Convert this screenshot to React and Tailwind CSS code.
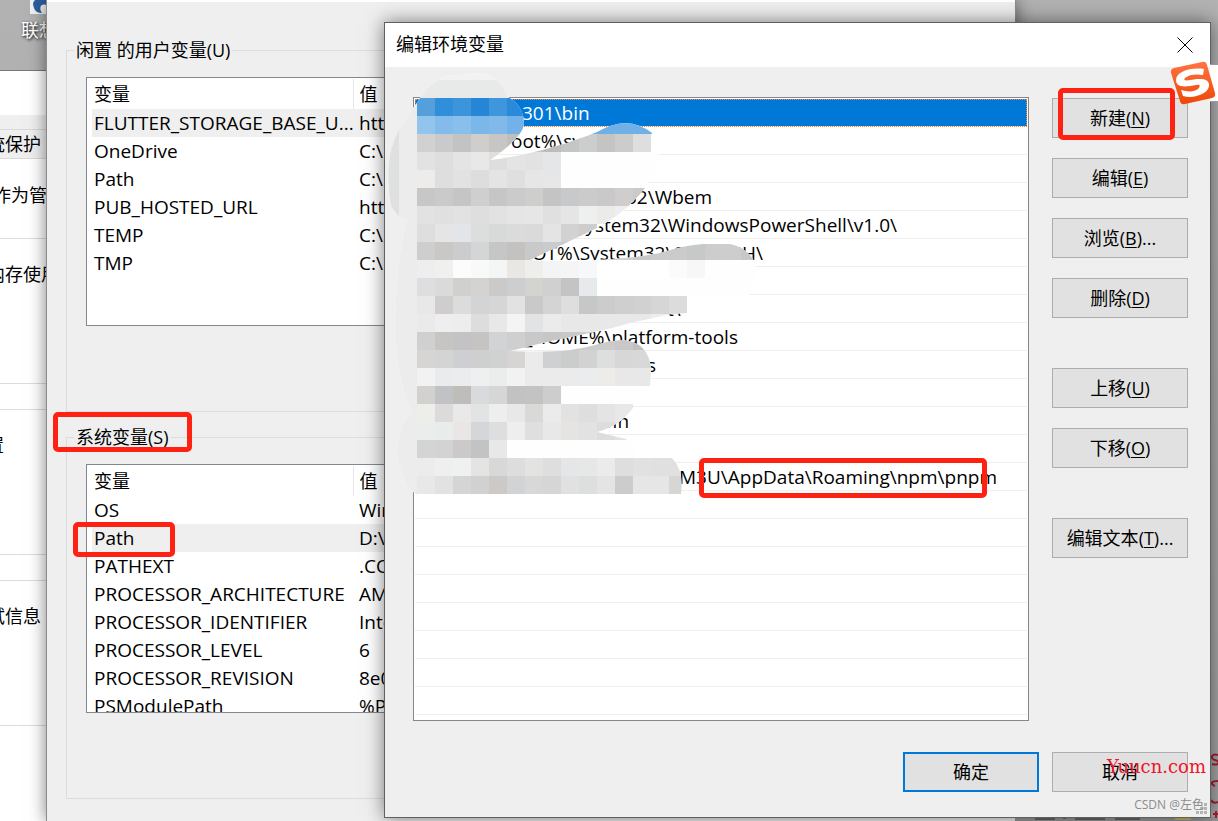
import React from 'react';

const userVars = [
    { name: 'FLUTTER_STORAGE_BASE_U...', value: 'https://storage', selected: true },
    { name: 'OneDrive', value: 'C:\\Users' },
    { name: 'Path', value: 'C:\\Users' },
    { name: 'PUB_HOSTED_URL', value: 'https://pub' },
    { name: 'TEMP', value: 'C:\\Users' },
    { name: 'TMP', value: 'C:\\Users' },
];

const systemVars = [
    { name: 'OS', value: 'Windows_NT' },
    { name: 'Path', value: 'D:\\y', selected: true },
    { name: 'PATHEXT', value: '.COM' },
    { name: 'PROCESSOR_ARCHITECTURE', value: 'AMD64' },
    { name: 'PROCESSOR_IDENTIFIER', value: 'Intel64' },
    { name: 'PROCESSOR_LEVEL', value: '6' },
    { name: 'PROCESSOR_REVISION', value: '8e0c' },
    { name: 'PSModulePath', value: '%Prog' },
];

// indent is the width of the private part in front of each entry
const paths = [
    { indent: 107, text: '301\\bin' },
    { indent: 96, text: 'oot%\\sy' },
    { indent: 0, text: '' },
    { indent: 211, text: '32\\Wbem' },
    { indent: 160, text: 'System32\\WindowsPowerShell\\v1.0\\' },
    { indent: 102, text: 'OOT%\\System32\\OpenSSH\\' },
    { indent: 0, text: '' },
    { indent: 252, text: 't\\' },
    { indent: 109, text: '_HOME%\\platform-tools' },
    { indent: 232, text: 's' },
    { indent: 0, text: '' },
    { indent: 186, text: 'bin' },
    { indent: 0, text: '' },
    { indent: 264, text: 'M3U\\AppData\\Roaming\\npm\\pnpm' },
];

const emptyRows = [1, 2, 3, 4, 5, 6, 7, 8];

const mosaic = [
    '559fda 2f8fdb 3c95db 2586d8 3f96dc 2a8ada',
    '92c5ec 83bcea 88bfec 7cb7e9 80b9ea 72b2e8 6fb1e7 6fb1e7 6fb1e7 6fb1e7 6fb1e7 6fb1e7 6fb1e7 6fb1e7',
    'd1d1d1 cacacc c4c3c3 cfcecd c8c6c4 c0bfbe c6c6c6 bcbcbc c4c5c5 cccdce c5c4c2 cccccd dedede',
    'e2e2e2 dedede e4e4e4 e8e8e8 dededc e4e4e4 e2e2e2 e5e6e8',
    'eeecea dedede e2e2e2 dddddd e4e4e4 dfdfdf e6e6e6 e7e7e8',
    'c7c7c7 cacaca c5c5c6 cfcfcf c6c6c6 cbcbcb cececd c4c4c5 c8c9ca cbcbcb c9c9c9 cfcecd cbcac9',
    'e2e2e2 e0e0e0 e2e2e2 dedede e2e2e2 e5e5e5 e6e6e6 e0e0e0 e5e5e5 eeefef ebebea eeeeee',
    'dededf e5e5e5 e2e5ea dcdedd d8d9d9 dbdbdb dadada e4e4e4 d2d2d2 cdcdcd',
    'cececf c9c8c7 cccccc d3d5d7 c6c6c6 c3c2c0 c9c9c9 c9cbcd c8c8c8 c8c8c8 cdcdcd d0d0d0 c8c8c8 cccccc cbcbcb c7c9c8 cdcdcd cdcdcd c8c8c8',
    'eeeeee f0f0ee fcfcfc f9f9f9 f4f6f5 e8e7e3 eeeeed f3f4f6 f5f5f5 f7f8fa ffffff ffffff ffffff ffffff fbfbfb f7f7f7',
    'dedee0 dadada d0d0ce d4d3d1 cbcac8 ccced0 d3d3d0 d0d0d0 c4c4c4 e6eaed',
    'e8e8e8 d0cecc dcdcdc d2d4d6 d6d6d6 e2e2e2 c9c9c9 d4d4d5 dedede c5c8c7 cccccc cfcfcf d1d1d1 d6d6d6 dcdcdc',
    'eaeaea eeeeee ededed dddddd e8e8e8 f4f4f4 e2e3e4 ebebeb e8e8e8 e8e8e8 e8e8e8 e8e8e8 e8e8e8 eeeeee',
    'd0d0d0 c7c5c2 c3c3c6 c6c4c3 d2d3d4 cfcfcf c9c9c9 c6c6c6 c8c8c8 cccccc cccccc c8c8c8 bfc1c3 c8c8c8',
    'd6d5d4 d4d4d4 cdcfd3 cfcfcf d0d2d1 d6d5d3 ebebeb cfd0d1 cacdcc d2d2d2 dcdfde d7d7d7 d8d8d8',
    'f2f2f2 eaebec ebecee eef0ef ebecec f2f2f2 ebebeb ebebeb ebebeb ebeced edece8 e8e8e8 e8e8e8',
    'd2d1cf c1c2c6 bfbdb9 d8dadd d6d6d6 c2c2c2 c3c3c4 cdcdcd',
    'ededea dcdbd9 e9e9e9 e1e4e3 eeeeee e8e8e8 d9d9d7 ebebeb e2e2e3 dedede e4e4e4 e6e8ea',
    'ebedec e8ecea e9e6e5 d4d6da dedede eeeeee dfdfdf e8e8e8 e5e4e2 e2e2e5 dedddb e4e2df',
    'd4d4d4 d3d3d3 cbc9ca c3c3c3 e6e9e8',
    'ececec eeefee eff1f0 e4e4e2 d8d8d8 dddddd e3e3e2 dedede e5e6e8 e6e8e8 ebebeb dededd e1e1e1 e0e0e0 e0e0e0',
    'e8e8e8 e2e2e2 d5d5d5 d1d1d1 ccc9c7 d1d3d5 d8d8d8 d6d6d6 e1e1e1 dddfde e4e4e4 cccccc e6e6e6 e6e6e6 d8d6d4',
].map(row => row.split(' '));

const Redaction = () => (
    <svg className="absolute left-0 top-[47px] pointer-events-none" width="380" height="428" viewBox="385 70 380 428" aria-hidden="true">
        <clipPath id="brush">
            <path d="M440 79 Q447 74 460 76 Q478 69 495 79 Q503 85 508 97 Q524 106 524 124 Q523 137 490 160 C525 156 565 145 597 132 Q628 114 652 133 L651 152 L660 155 Q658 170 648 183 L645 188 Q625 214 593 230 L530 260 C560 262 590 261 613 259 Q640 257 660 253 Q685 245 703 244 L730 244 Q745 247 753 259 Q759 272 749 295 L687 296 L687 313 L672 314 L630 323 C605 331 560 338 510 351 Q535 352 560 351 C590 349 600 341 623 340 Q648 342 651 368 L650 386 L633 404 L633 408 Q620 426 597 432 L626 439 L640 458 L672 458 Q684 470 681 494 L417 495 Q400 482 398 455 Q397 425 412 413 Q401 390 397 355 Q394 330 396 300 Q398 250 407 220 Q396 217 391 205 Q386 180 390 155 Q395 130 417 103 Q425 88 440 79 Z" />
        </clipPath>
        <g clipPath="url(#brush)" shapeRendering="crispEdges">
            <rect x="385" y="70" width="380" height="428" fill="#fefefe" />
            <rect x="385" y="70" width="32" height="428" fill="#ececec" />
            <rect x="385" y="98" width="14" height="128" fill="#dfe0e0" />
            <rect x="385" y="70" width="380" height="10" fill="#f2f2f2" />
            <rect x="385" y="80" width="380" height="18" fill="#e8eae9" />
            {mosaic.map((row, r) => row.map((c, i) => (
                <rect key={`${r}-${i}`} x={417 + i * 18} y={98 + r * 18} width="18" height="18" fill={`#${c}`} />
            )))}
        </g>
    </svg>
);

const VarTable = ({ rows }) => (
    <div className="h-[249px] overflow-hidden border border-[#828790] bg-white pl-[5px] pt-px">
        <table className="w-full table-fixed border-collapse text-left">
            <thead>
                <tr className="h-[30px]">
                    <th className="w-[261px] border-r border-[#e5e5e5] p-0 pl-0.5 font-normal">变量</th>
                    <th className="p-0 pl-1.5 font-normal">值</th>
                </tr>
            </thead>
            <tbody className="text-[19px]">
                {rows.map(row => (
                    <tr key={row.name} className={row.selected ? 'h-7 bg-[#efefef]' : 'h-7'}>
                        <td className="whitespace-nowrap p-0 pl-0.5">{row.name}</td>
                        <td className="whitespace-nowrap p-0 pl-1.5">{row.value}</td>
                    </tr>
                ))}
            </tbody>
        </table>
    </div>
);

const VarGroup = ({ title, rows }) => (
    <fieldset className="border border-[#dcdcdc] pb-[85px] pl-[19px] pr-[19px]">
        <legend className="-ml-3 px-0.5 leading-6">{title}</legend>
        <div className="pt-[15px]">
            <VarTable rows={rows} />
        </div>
    </fieldset>
);

const SystemProperties = () => (
    <section className="absolute -left-40 bottom-0 top-[70px] w-96 border-t border-[#777] bg-white">
        <div className="h-11"></div>
        <div className="flex h-11 items-end bg-[#efefef]">
            <button className="flex h-[30px] w-full items-center border-y border-[#d9d9d9] pl-[129px]">系统保护</button>
        </div>
        <p className="flex h-20 items-start border-b border-[#dcdcdc] pl-[153px] pt-6">作为管理员</p>
        <p className="flex h-[145px] items-start border-b border-[#dcdcdc] pl-[147px] pt-[23px]">内存使用</p>
        <div className="h-[26px] border-b border-[#dcdcdc]"></div>
        <p className="flex h-[145px] items-start border-b border-[#dcdcdc] pl-[128px] pt-[23px]">设置</p>
        <div className="h-[26px] border-b border-[#dcdcdc]"></div>
        <p className="flex h-[145px] items-start border-b border-[#dcdcdc] pl-[129px] pt-[23px]">调试信息</p>
    </section>
);

const EnvironmentWindow = () => (
    <section className="absolute bottom-0 left-[46px] right-[202px] top-0 overflow-hidden border-x border-[#8c8c8c] bg-[#efefef] shadow-[0_0_16px_rgba(0,0,0,0.5)]">
        <div className="h-0.5 bg-white"></div>
        <div className="flex flex-col gap-[13px] px-[19px] pt-9">
            <VarGroup title="闲置 的用户变量(U)" rows={userVars} />
            <VarGroup title="系统变量(S)" rows={systemVars} />
        </div>
    </section>
);

const SideButton = ({ label, accel, more }) => (
    <button className="h-10 w-full border border-[#adadad] bg-[#e1e1e1]">
        {label}(<u className="underline-offset-2">{accel}</u>){more}
    </button>
);

const EditDialog = () => (
    <section role="dialog" aria-label="编辑环境变量" className="absolute bottom-[3px] left-[384px] right-[7px] top-[22px] flex flex-col border border-[#606060] bg-[#efefef] shadow-[0_0_18px_rgba(0,0,0,0.5)]">
        <header className="flex h-11 shrink-0 items-center justify-between bg-white pl-[11px] pr-4">
            <h1 className="pb-0.5">编辑环境变量</h1>
            <button aria-label="关闭">
                <svg width="17" height="16" viewBox="0 0 17 16" stroke="#000" strokeWidth="1" fill="none">
                    <path d="M.5 .5l15 15M15.5 .5l-15 15" />
                </svg>
            </button>
        </header>
        <div className="flex min-h-0 flex-1 gap-[23px] pl-7 pr-[22px] pt-[30px]">
            <ul className="min-w-0 flex-1 overflow-hidden border border-[#828790] bg-white p-px text-[19px]">
                {paths.map((p, i) => (
                    <li
                        key={i}
                        className={i === 0
                            ? 'h-7 whitespace-nowrap border-b border-[#efefef] bg-[#0078d7] bg-clip-padding leading-7 text-white outline-1 -outline-offset-1 outline-dotted outline-[#ff8728]'
                            : 'h-7 whitespace-nowrap border-b border-[#efefef] leading-7'}
                        style={{ paddingLeft: p.indent }}
                    >
                        {p.text}
                    </li>
                ))}
                {emptyRows.map(n => <li key={n} className="h-7 border-b border-[#efefef]"></li>)}
            </ul>
            <div className="flex w-[136px] flex-col gap-5 pt-px">
                <SideButton label="新建" accel="N" />
                <SideButton label="编辑" accel="E" />
                <SideButton label="浏览" accel="B" more="..." />
                <SideButton label="删除" accel="D" />
                <div className="flex flex-col gap-5 pt-[30px]">
                    <SideButton label="上移" accel="U" />
                    <SideButton label="下移" accel="O" />
                </div>
                <div className="pt-[30px]">
                    <SideButton label="编辑文本" accel="T" more="..." />
                </div>
            </div>
        </div>
        <footer className="flex justify-end gap-[13px] pb-[25px] pr-[22px] pt-[31px]">
            <button className="h-10 w-[136px] border-2 border-[#0078d7] bg-[#e1e1e1]">确定</button>
            <button className="h-10 w-[136px] border border-[#adadad] bg-[#e1e1e1]">取消</button>
        </footer>
        <Redaction />
        <svg className="absolute bottom-0.5 right-0.5" width="12" height="12" fill="#b4b4b4">
            <path d="M8 0h3v3h-3zM8 4h3v3h-3zM4 4h3v3h-3zM8 8h3v3h-3zM4 8h3v3h-3zM0 8h3v3h-3z" />
        </svg>
    </section>
);

const SogouBar = () => (
    <div className="absolute right-0 top-[61px] flex h-11 w-12 items-center justify-end">
        <div className="h-[38px] w-2 border-y border-[#999] bg-white"></div>
        <svg className="absolute left-0 top-0" width="46" height="44" viewBox="0 0 46 44">
            <defs>
                <linearGradient id="sogou" x1="0" y1="0" x2="0" y2="1">
                    <stop offset="0" stopColor="#ff7440" />
                    <stop offset="1" stopColor="#ee4708" />
                </linearGradient>
            </defs>
            <path d="M4 7 L32 1 Q36 0 37 4 L45 32 Q46 36 42 37 L15 43 Q11 44 10 40 L1 12 Q0 8 4 7Z" fill="url(#sogou)" />
            <path d="M34 8 C20 6 6 11 6 19 C6 27 16 26 26 24 C30 23 31 25 28 28 C24 31 18 31 11 29 L13 35 C24 38 38 33 39 25 C40 17 30 17 20 19 C15 20 13 19 15 17 C19 13 27 13 33 14 Z" fill="#fff" />
        </svg>
    </div>
);

// tail of the wallpaper that peeks out around the dialog
const Wallpaper = () => (
    <svg className="absolute bottom-0 right-0" width="203" height="76" aria-hidden="true">
        <rect x="0" y="72" width="203" height="4" fill="#999" />
        <path d="M20 74h20M48 73h3M60 74h30M100 74h25" stroke="#555" strokeWidth="1.5" />
        <path d="M160 74h16" stroke="#c8b560" strokeWidth="2" />
        <path d="M203 10c-7-2-8 4-3 5s5 6-3 4M203 36c-7 0-8 3-3 5M196 55q2 4 7 2M198 69h5M201 66v7" stroke="#a32035" strokeWidth="2" fill="none" />
    </svg>
);

export default function App() {
    return (
        <main className="relative h-screen overflow-hidden bg-linear-to-b from-[#b2b2b2] to-[#a4a4a4] font-['Open_Sans','Noto_Sans_CJK_SC',sans-serif] text-[18px] leading-6 text-black">
            <div className="absolute left-[21px] top-0 text-white">
                <svg className="ml-[9px]" width="28" height="14">
                    <rect width="28" height="14" fill="#f2f2f2" />
                    <path d="M3 4C4 10 6 13 12 13C9 9 10 3 16 5V0H5Q3 2 3 4Z" fill="#2c5f9e" />
                </svg>
                <span className="block pt-1 [text-shadow:1px_1px_3px_#000]">联想</span>
            </div>
            <SystemProperties />
            <EnvironmentWindow />
            <Wallpaper />
            <EditDialog />
            <SogouBar />
            <div className="pointer-events-none absolute left-[53px] top-[412px] h-10 w-[139px] rounded-[5px] border-5 border-[#ff2112]"></div>
            <div className="pointer-events-none absolute left-[73px] top-[522px] h-[35px] w-[102px] rounded-[5px] border-5 border-[#ff2112]"></div>
            <div className="pointer-events-none absolute left-[699px] top-[458px] h-10 w-72 rounded-[5px] border-5 border-[#ff2112]"></div>
            <div className="pointer-events-none absolute right-[43px] top-[88px] h-[52px] w-[117px] rounded-[5px] border-5 border-[#ff2112]"></div>
            <span className="absolute bottom-[42px] right-3 font-['DejaVu_Serif',serif] text-[18px] text-[#f01428]">Yuucn.com</span>
            <span className="absolute bottom-1 right-3.5 text-[12px] text-[#8c8c8c]">CSDN @左色</span>
        </main>
    );
}
